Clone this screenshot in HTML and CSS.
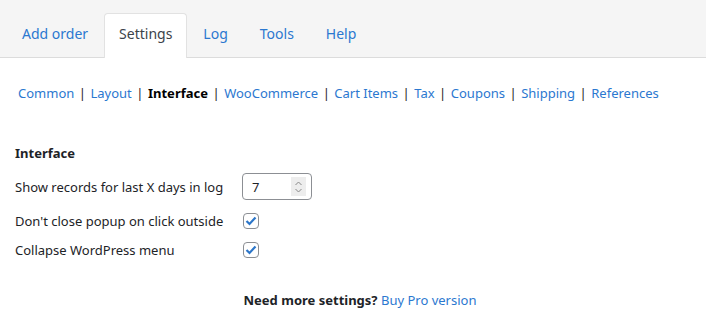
FILE: index.html
```html
<!DOCTYPE html>
<html lang="en">
<head>
    <meta charset="UTF-8">
    <title>Settings</title>
    <link rel="stylesheet" href="styles.css">
</head>
<body>
    <div class="tabs">
        <a class="tab" href="#">Add order</a>
        <a class="tab active" href="#">Settings</a>
        <a class="tab" href="#">Log</a>
        <a class="tab" href="#">Tools</a>
        <a class="tab" href="#">Help</a>
    </div>

    <div class="subnav">
        <a href="#">Common</a><span class="sep">|</span><a href="#">Layout</a><span class="sep">|</span><b>Interface</b><span class="sep">|</span><a href="#">WooCommerce</a><span class="sep">|</span><a href="#">Cart Items</a><span class="sep">|</span><a href="#">Tax</a><span class="sep">|</span><a href="#">Coupons</a><span class="sep">|</span><a href="#">Shipping</a><span class="sep">|</span><a href="#">References</a>
    </div>

    <div class="section">
        <h3>Interface</h3>
        <div class="row first">
            <label>Show records for last X days in log</label>
            <div class="number">
                <span>7</span>
                <span class="spin">
                    <svg width="9" height="14" viewBox="0 0 9 14"><path d="M1.5 5 L4.5 2 L7.5 5 M1.5 9 L4.5 12 L7.5 9" fill="none" stroke="#888" stroke-width="1"/></svg>
                </span>
            </div>
        </div>
        <div class="row">
            <label>Don't close popup on click outside</label>
            <span class="check"><svg width="12" height="10" viewBox="0 0 12 10"><path d="M1.5 5 L4.5 8 L10.5 1.5" fill="none" stroke="#2c76c9" stroke-width="2.2"/></svg></span>
        </div>
        <div class="row">
            <label>Collapse WordPress menu</label>
            <span class="check"><svg width="12" height="10" viewBox="0 0 12 10"><path d="M1.5 5 L4.5 8 L10.5 1.5" fill="none" stroke="#2c76c9" stroke-width="2.2"/></svg></span>
        </div>
    </div>

    <p class="pro"><b>Need more settings?</b> <a href="#">Buy Pro version</a></p>
</body>
</html>
```

FILE: styles.css
```css
body {
    margin: 0;
    font-family: "Noto Sans", sans-serif;
    font-size: 13px;
    color: #1d2327;
    background-color: #fff;
}
a {
    color: #2b78d0;
    text-decoration: none;
}
.tabs {
    display: flex;
    height: 44px;
    padding: 13px 0 0 6px;
    background-color: #f5f5f5;
    border-bottom: 1px solid #dcdcdc;
}
.tab {
    padding: 11px 16px 0;
    font-size: 14px;
    margin-bottom: -1px;
}
.active {
    color: #3c434a;
    background-color: #fff;
    border: 1px solid #e2e2e2;
    border-bottom: none;
    border-radius: 4px 4px 0 0;
    padding: 10px 14px 0;
}
.subnav {
    padding: 26px 0 0 18px;
    white-space: nowrap;
}
.sep {
    margin: 0 4.5px;
    color: #1d2327;
}
.subnav b {
    color: #000;
}
.section {
    padding: 42px 15px 0;
}
h3 {
    margin: 0 0 11px;
    font-size: 13px;
}
.row {
    display: flex;
    align-items: center;
    margin-bottom: 11px;
}
.row.first {
    margin-bottom: 12px;
}
label {
    width: 227px;
}
.number {
    display: flex;
    align-items: center;
    justify-content: space-between;
    width: 54px;
    height: 25px;
    padding: 0 5px 0 9px;
    border: 1px solid #8c8f94;
    border-radius: 4px;
}
.spin {
    display: flex;
    align-items: center;
    justify-content: center;
    width: 15px;
    height: 19px;
    background-color: #ededed;
}
.check {
    display: flex;
    align-items: center;
    justify-content: center;
    width: 14px;
    height: 14px;
    margin-left: 1px;
    border: 1px solid #8c8f94;
    border-radius: 4px;
}
.pro {
    margin: 32px 0 0;
    text-align: center;
    padding-left: 14px;
}
```
